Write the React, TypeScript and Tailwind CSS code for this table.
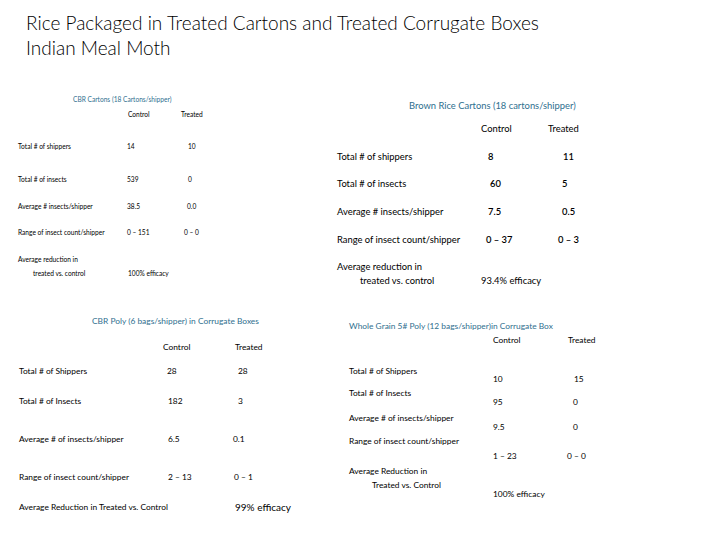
const teal = 'text-[#2f6f8f]'

// CBR cartons, top left
const TopLeft = () => (
  <div className="ml-[18px] mt-[9px] w-[319px] text-[6.6px] leading-[10px] text-black">
    <div className={`h-[10px] pl-[55px] ${teal}`}>CBR Cartons (18 Cartons/shipper)</div>
    <div className="mt-[5px] flex h-[10px]">
      <span className="w-[110px]" />
      <span className="w-[53px]">Control</span>
      <span>Treated</span>
    </div>
    <div className="mt-[22px] flex h-[10px]">
      <span className="w-[109px]">Total # of shippers</span>
      <span className="w-[61px]">14</span>
      <span>10</span>
    </div>
    <div className="mt-[23px] flex h-[10px]">
      <span className="w-[109px]">Total # of insects</span>
      <span className="w-[61px]">539</span>
      <span>0</span>
    </div>
    <div className="mt-[17px] flex h-[10px]">
      <span className="w-[109px]">Average # insects/shipper</span>
      <span className="w-[60px]">38.5</span>
      <span>0.0</span>
    </div>
    <div className="mt-[16px] flex h-[10px]">
      <span className="w-[109px]">Range of insect count/shipper</span>
      <span className="w-[57px]">0 – 151</span>
      <span>0 – 0</span>
    </div>
    <div className="mt-[17px] h-[10px]">Average reduction in</div>
    <div className="mt-[4px] flex h-[10px]">
      <span className="w-[110px] pl-[15px]">treated vs. control</span>
      <span>100% efficacy</span>
    </div>
  </div>
)

// brown rice cartons, top right
const TopRight = () => (
  <div className="mt-[15px] text-[9.4px] leading-[12px] text-black">
    <div className={`h-[12px] pl-[72px] ${teal}`}>Brown Rice Cartons (18 cartons/shipper)</div>
    <div className="mt-[11px] flex h-[12px]">
      <span className="w-[144px]" />
      <span className="w-[67px]">Control</span>
      <span>Treated</span>
    </div>
    <div className="mt-[16px] flex h-[12px]">
      <span className="w-[151px]">Total # of shippers</span>
      <span className="w-[75px] font-semibold">8</span>
      <span className="font-semibold">11</span>
    </div>
    <div className="mt-[15px] flex h-[12px]">
      <span className="w-[153px]">Total # of insects</span>
      <span className="w-[72px] font-semibold">60</span>
      <span className="font-semibold">5</span>
    </div>
    <div className="mt-[16px] flex h-[12px]">
      <span className="w-[151px]">Average # insects/shipper</span>
      <span className="w-[74px] font-semibold">7.5</span>
      <span className="font-semibold">0.5</span>
    </div>
    <div className="mt-[16px] flex h-[12px]">
      <span className="w-[149px]">Range of insect count/shipper</span>
      <span className="w-[72px] font-semibold">0 – 37</span>
      <span className="font-semibold">0 – 3</span>
    </div>
    <div className="mt-[15px] h-[12px]">Average reduction in</div>
    <div className="mt-[2px] flex h-[12px]">
      <span className="w-[144px] pl-[23px]">treated vs. control</span>
      <span>93.4% efficacy</span>
    </div>
  </div>
)

// CBR poly, bottom left
const BottomLeft = () => (
  <div className="ml-[19px] mt-[11px] w-[330px] text-[8.4px] leading-[10px] text-black">
    <div className={`h-[10px] pl-[73px] ${teal}`}>CBR Poly (6 bags/shipper) in Corrugate Boxes</div>
    <div className="mt-[16px] flex h-[10px]">
      <span className="w-[144px]" />
      <span className="w-[72px]">Control</span>
      <span>Treated</span>
    </div>
    <div className="mt-[14px] flex h-[10px]">
      <span className="w-[148px]">Total # of Shippers</span>
      <span className="w-[71px]">28</span>
      <span>28</span>
    </div>
    <div className="mt-[20px] flex h-[10px]">
      <span className="w-[149px]">Total # of Insects</span>
      <span className="w-[70px]">182</span>
      <span>3</span>
    </div>
    <div className="mt-[28px] flex h-[10px]">
      <span className="w-[149px]">Average # of insects/shipper</span>
      <span className="w-[65px]">6.5</span>
      <span>0.1</span>
    </div>
    <div className="mt-[28px] flex h-[10px]">
      <span className="w-[149px]">Range of insect count/shipper</span>
      <span className="w-[66px]">2 – 13</span>
      <span>0 – 1</span>
    </div>
    <div className="mt-[20px] flex h-[10px] items-center">
      <span className="w-[216px]">Average Reduction in Treated vs. Control</span>
      <span className="text-[10px]">99% efficacy</span>
    </div>
  </div>
)

// whole grain poly, bottom right
const BottomRight = () => (
  <div className="mt-[17px] text-[8.4px] leading-[8px] text-black">
    <div className={`h-[8px] ${teal}`}>Whole Grain 5# Poly (12 bags/shipper)in Corrugate Box</div>
    <div className="mt-[6px] flex h-[8px]">
      <span className="w-[144px]" />
      <span className="w-[75px]">Control</span>
      <span>Treated</span>
    </div>
    <div className="mt-[23px] h-[8px]">Total # of Shippers</div>
    <div className="mt-0 flex h-[8px]">
      <span className="w-[144px]" />
      <span className="w-[81px]">10</span>
      <span>15</span>
    </div>
    <div className="mt-[6px] h-[8px]">Total # of Insects</div>
    <div className="mt-[1px] flex h-[8px]">
      <span className="w-[144px]" />
      <span className="w-[80px]">95</span>
      <span>0</span>
    </div>
    <div className="mt-[8px] h-[8px]">Average # of insects/shipper</div>
    <div className="mt-[1px] flex h-[8px]">
      <span className="w-[144px]" />
      <span className="w-[80px]">9.5</span>
      <span>0</span>
    </div>
    <div className="mt-[6px] h-[8px]">Range of insect count/shipper</div>
    <div className="mt-[7px] flex h-[8px]">
      <span className="w-[144px]" />
      <span className="w-[74px]">1 – 23</span>
      <span>0 – 0</span>
    </div>
    <div className="mt-[7px] h-[8px]">Average Reduction in</div>
    <div className="mt-[6px] h-[8px] pl-[23px]">Treated vs. Control</div>
    <div className="mt-[1px] flex h-[8px]">
      <span className="w-[144px]" />
      <span>100% efficacy</span>
    </div>
  </div>
)

export default function App() {
  return (
    <div className="w-[720px] h-[540px] overflow-hidden bg-white font-['Lato',sans-serif]">
      <div className="h-[85px] pl-[26px] pt-[10px] text-[19px] leading-[25px] font-light text-black">
        <div>Rice Packaged in Treated Cartons and Treated Corrugate Boxes</div>
        <div>Indian Meal Moth</div>
      </div>
      <div className="flex h-[220px]">
        <TopLeft />
        <TopRight />
      </div>
      <div className="flex">
        <BottomLeft />
        <BottomRight />
      </div>
    </div>
  )
}
